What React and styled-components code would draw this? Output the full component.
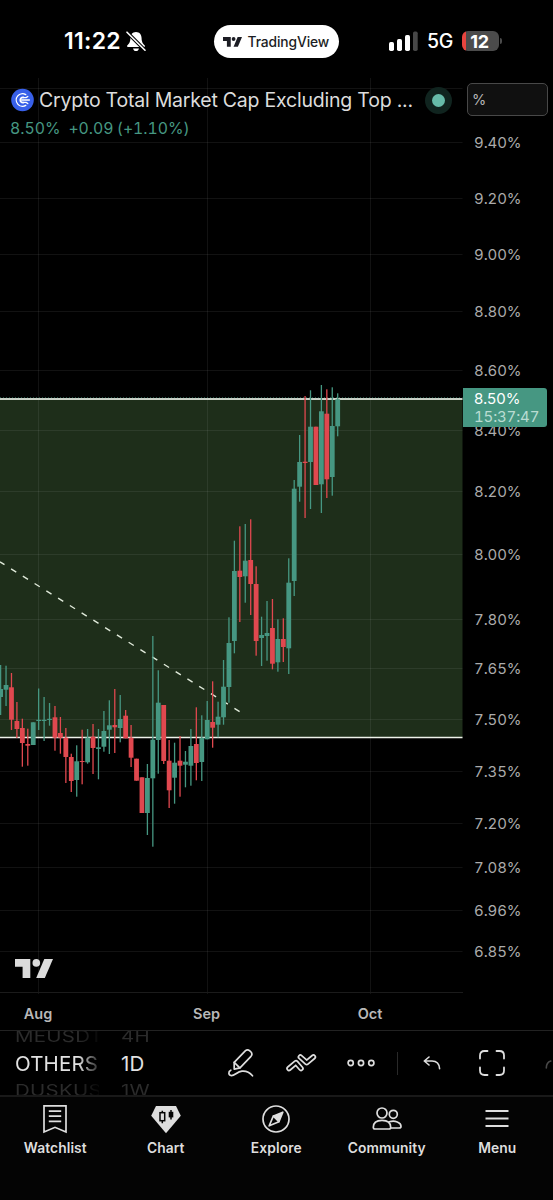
import React from "react";
import styled, { createGlobalStyle } from "styled-components";

const UP = "#469782";
const DOWN = "#e0484f";
const INK = "#d9d9d9";

const GlobalStyle = createGlobalStyle`
  * { box-sizing: border-box; }
  html, body { margin: 0; background: #000; }
  body { font-family: Inter, "Liberation Sans", sans-serif; color: ${INK}; overflow: hidden; }
  svg { display: block; }
`;

const Screen = styled.div`
  width: 553px;
  height: 1200px;
  display: flex;
  flex-direction: column;
  background: #000;
  overflow: hidden;
`;

/* status bar */
const StatusBar = styled.header`
  height: 78px;
  padding: 25px 50px 0 64px;
  display: flex;
  align-items: flex-start;
  flex: none;
  color: #fff;
`;
const Clock = styled.div`
  width: 150px;
  height: 32px;
  display: flex;
  align-items: center;
  gap: 5.5px;
  font-size: 23px;
  font-weight: 600;
  letter-spacing: 0.3px;
`;
const Island = styled.div`
  width: 125px;
  height: 33px;
  border-radius: 17px;
  background: #fff;
  color: #1c1d24;
  display: flex;
  align-items: center;
  padding-left: 9px;
  gap: 5.5px;
  font-size: 13.8px;
  font-weight: 500;
  letter-spacing: -0.1px;
`;
const Radio = styled.div`
  height: 32px;
  margin-left: 50px;
  display: flex;
  align-items: center;
  font-size: 19.5px;
  font-weight: 500;
`;
const Network = styled.span`
  width: 35px;
  margin-left: 9px;
  letter-spacing: -0.2px;
`;
const Battery = styled.div`
  width: 37px;
  height: 20px;
  border-radius: 6px;
  background: linear-gradient(90deg, #e8453f 0 4.5px, #4b4b4b 4.5px);
  display: flex;
  align-items: center;
  justify-content: center;
  padding-right: 2px;
  font-size: 18px;
  font-weight: 700;
  letter-spacing: -0.2px;
`;
const BatteryCap = styled.div`
  width: 2px;
  height: 6px;
  margin-left: 1px;
  border-radius: 0 2px 2px 0;
  background: #4b4b4b;
`;

/* chart */
const ChartArea = styled.main`
  position: relative;
  height: 952px;
  flex: none;
  display: flex;
`;
const Pane = styled.div`
  width: 463px;
  display: flex;
  flex-direction: column;
`;
const TimeAxis = styled.div`
  height: 36px;
  display: grid;
  grid-template-columns: 76px 261px 66px 1fr;
  align-items: center;
  font-size: 14.5px;
  font-weight: 600;
  color: #b8b8b8;
  & > span { text-align: center; white-space: nowrap; padding-top: 3px; }
`;
const PriceAxis = styled.div`
  flex: 1;
  display: flex;
  flex-direction: column;
  padding: 5px 5px 0 4px;
`;
const UnitBox = styled.div`
  height: 33px;
  flex: none;
  border: 1.5px solid #484848;
  border-radius: 5px;
  background: #101010;
  padding-left: 4px;
  display: flex;
  align-items: center;
  font-size: 14.5px;
  color: #b5b5b5;
`;
const PriceTick = styled.div`
  height: 18px;
  flex: none;
  margin-top: ${(p) => p.$gap}px;
  padding-left: 7px;
  line-height: 18px;
  font-size: 15px;
  font-variant-numeric: tabular-nums;
  letter-spacing: -0.1px;
  color: #ababab;
`;
const PriceTag = styled.div`
  position: absolute;
  left: 463px;
  top: 310px;
  width: 83.5px;
  height: 38.5px;
  border-radius: 0 3px 3px 0;
  background: ${UP};
  padding: 1px 0 0 11px;
  color: #fff;
  font-size: 15px;
  line-height: 20px;
  & > div:last-child {
    color: #b9dcd2;
    line-height: 15px;
    font-variant-numeric: tabular-nums;
    letter-spacing: -0.15px;
  }
`;
const Legend = styled.div`
  position: absolute;
  left: 10px;
  top: 8px;
  width: 444px;
`;
const LegendTitle = styled.div`
  height: 28px;
  display: flex;
  align-items: center;
  color: #dcdcdc;
  font-size: 19.5px;
  white-space: nowrap;
`;
const LegendName = styled.span`
  width: 385.5px;
  margin-left: 5px;
  letter-spacing: -0.22px;
`;
const LegendValues = styled.div`
  height: 26px;
  line-height: 29px;
  display: flex;
  gap: 8px;
  color: ${UP};
  font-size: 15.8px;
  font-variant-numeric: tabular-nums;
  letter-spacing: -0.02px;
  word-spacing: -1px;
`;
const LiveDot = styled.div`
  width: 27px;
  height: 27px;
  border-radius: 50%;
  background: #10241f;
  display: grid;
  place-items: center;
  &::after {
    content: "";
    width: 13px;
    height: 13px;
    border-radius: 50%;
    background: #66bba9;
  }
`;

/* toolbar */
const Toolbar = styled.div`
  height: 67px;
  flex: none;
  border-top: 1px solid #222;
  border-bottom: 2px solid #191919;
  display: flex;
  align-items: center;
  overflow: hidden;
`;
const Wheel = styled.div`
  width: ${(p) => p.$width}px;
  height: 64px;
  padding-top: 1px;
  margin-left: ${(p) => p.$offset}px;
  flex: none;
  display: flex;
  flex-direction: column;
  align-items: flex-start;
  justify-content: center;
  overflow: hidden;
  white-space: nowrap;
  ${(p) => p.$fade && "mask-image: linear-gradient(90deg, #000 75%, transparent 105%);"}
`;
const WheelItem = styled.div`
  height: ${(p) => (p.$active ? 32 : 22)}px;
  line-height: ${(p) => (p.$active ? 32 : 22)}px;
  flex: none;
  font-size: 20.5px;
  letter-spacing: ${(p) => (p.$active ? 0.15 : 0.25)}px;
  color: ${(p) => (p.$active ? "#e2e2e2" : "#2b2b2b")};
  transform: ${(p) => (p.$active ? "none" : "scaleY(0.76)")};
`;
const Tools = styled.div`
  flex: 1;
  margin-left: 29px;
  display: grid;
  grid-template-columns: 61px 60px 60px 12px 58px 62px 1fr;
  align-items: center;
  justify-items: center;
  & > :last-child { justify-self: end; }
`;
const Divider = styled.div`
  width: 1px;
  height: 23px;
  background: #292929;
`;

/* bottom navigation */
const TabBar = styled.nav`
  flex: 1;
  background: #040404;
  display: grid;
  grid-template-columns: repeat(5, 110.5px);
`;
const Tab = styled.div`
  display: flex;
  flex-direction: column;
  align-items: center;
  padding-top: 7px;
  font-size: 13.8px;
  font-weight: 600;
  letter-spacing: 0.1px;
  color: #dedede;
`;
const TabLabel = styled.span`
  margin-top: 4.5px;
  line-height: 18px;
`;

const candles = `
665 689 697 715 g|665.7 685 689.7 706 g|673 687.3 719.7 730 r|702 721 729 738 r
718.7 728 743 766.7 r|728.7 744 745.7 765.7 r|722.3 722.3 745 745 g|688.5 719.8 721 730 g
697 719.8 721 741 g|703 718.8 720 725.7 g|706 717.3 737.7 750.7 r|717 733 737.7 753.7 r
728 737.7 757 783 r|753.7 757 781 792 r|745.3 761.3 780 796.7 g|729.7 761 762 784.3 r
729 737.7 762.3 763.7 g|724 736.7 748 774 r|729 747.3 749 779.3 g|711 731 746.7 751.7 g
700.3 725.3 729.7 754 g|689 725 727.3 753 r|695 719 728 742.3 g|710 715.7 738.3 738.3 r
725 737.7 757.7 767 r|758.7 758.7 780.7 780.7 r|777.3 777.3 813 813 r|764 778 813 835 g
636 739.7 778.3 846.7 g|670.3 702.7 740 773.7 g|705 705 761 764 r|740 760.7 790.3 808 r
742.7 762.7 777.7 803.7 g|736 760.7 765.7 796.7 r|751 761.7 764.7 787.3 g|729 746 765.7 785.7 g
707.3 744 763 780.3 r|715.3 737.7 762 781 g|701 720 739.3 739.3 g|681.3 722 727.7 747.7 r
701.7 716.7 724.7 737.3 g|660 686.7 717.3 724.7 g|617.3 643 687 702.7 g|540.7 571 641 653.3 g
526.3 570.7 577 622 r|524 560.7 576.3 602.7 g|519.3 560 584 615 r|566.3 584 641 655.7 r
616.7 635 638 666 g|601 633 636 660.7 g|599 628 663.7 669.3 r|619.3 639 662.3 671.7 g
618.3 639 647 662 r|558.3 582.7 648.3 674 g|480 488.7 581 596 g|435 462 486.7 501.7 g
396 461.7 463 518 r|390.3 426.7 462 509 g|426.7 426.7 485 485 r|385 411.3 484.3 513 g
389.3 413.7 479.3 498 r|387.3 426 477 495.7 g|393.3 399.3 426.3 436.3 g`
  .trim()
  .split(/[|\n]/)
  .map((row) => {
    const [high, top, bottom, low, side] = row.split(" ");
    return { high: +high, top: +top, bottom: +bottom, low: +low, color: side === "g" ? UP : DOWN };
  });

const ticks = [
  ["9.40%", 142], ["9.20%", 198], ["9.00%", 254], ["8.80%", 311], ["8.60%", 370],
  ["8.40%", 430], ["8.20%", 491], ["8.00%", 554], ["7.80%", 619], ["7.65%", 668.5],
  ["7.50%", 719], ["7.35%", 771], ["7.20%", 823.5], ["7.08%", 867], ["6.96%", 910], ["6.85%", 951],
];

function TVLogo({ width, height, color }) {
  return (
    <svg width={width} height={height} viewBox="0 0 38 20" preserveAspectRatio="none" fill={color}>
      <path d="M0 0H15.5V19.5H7.8V8H0Z" />
      <circle cx="21.2" cy="4" r="3.8" />
      <path d="M29.3 0H38L29.8 19.5H21.2Z" />
    </svg>
  );
}

function Plot() {
  return (
    <svg width="463" height="916" viewBox="0 78 463 916">
      <rect x="0" y="399" width="462.5" height="339" fill="#1e2e1a" />
      <g stroke="#fff" strokeOpacity="0.07">
        {[88.5, ...ticks.map((t) => Math.floor(t[1]) + 0.5)].map((y) => (
          <path key={y} d={`M0 ${y}H462.5`} />
        ))}
        {[38.5, 207.5, 370.5].map((x) => (
          <path key={x} d={`M${x} 78V994`} />
        ))}
      </g>
      <path d="M0 992.5H463" stroke="#1b1b1b" />
      <path d="M0 561.9L240 711.8" stroke="#e0eada" strokeWidth="1.4" strokeDasharray="6.1 7.76" strokeDashoffset="0.8" />
      <path d="M0 399H462.5" stroke="#c9d0c6" strokeWidth="1.8" />
      <path d="M0 397.6H462.5" stroke={UP} strokeWidth="1" strokeDasharray="1 2" opacity="0.6" />
      <path d="M0 737.5H462.5" stroke="#eef2ea" strokeWidth="1.5" />
      {candles.map((c, i) => {
        const x = 0.6 + i * 5.437;
        return (
          <g key={i} fill={c.color}>
            <rect x={x - 0.65} y={c.high} width="1.3" height={c.low - c.high} />
            <rect x={x - 2.4} y={c.top} width="4.8" height={c.bottom - c.top} />
          </g>
        );
      })}
      <g transform="translate(15 959)" fill="#dcdcdc">
        <path d="M0 0H15.3V19H7.6V7.7H0Z" />
        <circle cx="21.3" cy="3.9" r="3.8" />
        <path d="M29.3 0H38L29.8 19H21.2Z" />
      </g>
    </svg>
  );
}

const line = { fill: "none", stroke: "#dedede", strokeLinecap: "round", strokeLinejoin: "round" };

function BellOff() {
  return (
    <svg width="20" height="21" viewBox="0 0 20 21">
      <path d="M10 1C6.3 1 4.5 3.9 4.4 7.2C4.3 11.2 3 12.6 1.4 14.2C.8 14.9 1 16 2 16H18C19 16 19.2 14.9 18.6 14.2C17 12.6 15.7 11.2 15.6 7.2C15.5 3.9 13.7 1 10 1ZM7 17.4H13C12.6 19 11.5 20 10 20S7.4 19 7 17.4Z" fill="#fff" />
      <path d="M1 1.2L19 19.2" stroke="#000" strokeWidth="3.6" />
      <path d="M1 1.2L19 19.2" stroke="#fff" strokeWidth="1.6" strokeLinecap="round" />
    </svg>
  );
}

function Signal() {
  return (
    <svg width="29" height="20" viewBox="0 0 29 20" fill="#fff">
      <rect x="0" y="11" width="5" height="9" rx="1.7" />
      <rect x="8" y="8" width="5" height="12" rx="1.7" />
      <rect x="16" y="4" width="5" height="16" rx="1.7" />
      <rect x="24" y="0.5" width="4.7" height="19.5" rx="1.7" fill="#484848" />
    </svg>
  );
}

function CoinIcon() {
  return (
    <svg width="24" height="24" viewBox="0 0 24 24" fill="none" stroke="#fff" strokeWidth="1.3" strokeLinecap="round">
      <circle cx="12.5" cy="12" r="11.3" fill="#3860e9" stroke="none" />
      <path d="M15.8 6.6A6.3 6.3 0 1 0 15.8 17.4" />
      <path d="M13.4 9.4C9.2 8.8 9.2 15.2 13.4 14.6" strokeWidth="1.7" />
      <path d="M11.5 12H19.4M13 9.6H16.2L17.8 8.4M13 14.4H16.2L17.8 15.6" />
    </svg>
  );
}

function DrawIcon() {
  return (
    <svg width="28" height="30" viewBox="0 0 28 30" {...line} strokeWidth="1.7">
      <path d="M7.2 14.4L18.5 2.7Q20.5 1 22.8 2.8L24 4Q25.8 6.2 24 8.3L13 19.8L7.2 21.1Z" />
      <path d="M7.2 14.4L12.8 19.8" />
      <path d="M3.8 22.2C1 23.4 1.3 27.4 4.3 27.6C7.8 27.8 10 23.6 15 23.2C19.5 22.8 23 24.8 25.5 27.8" />
    </svg>
  );
}

function PatternIcon() {
  return (
    <svg width="30" height="18" viewBox="0 0 30 18" overflow="visible" {...line}>
      {["M3 14.5L10 8.7L15 14.5", "M14.4 3L20.7 8.6L27.4 3"].map((d) => (
        <g key={d}>
          <path d={d} strokeWidth="5.6" />
          <path d={d} strokeWidth="2.2" stroke="#000" />
        </g>
      ))}
    </svg>
  );
}

function MoreIcon() {
  return (
    <svg width="28" height="8" viewBox="0 0 28 8" {...line} strokeWidth="1.7">
      <circle cx="3.7" cy="4" r="2.6" />
      <circle cx="14" cy="4" r="2.6" />
      <circle cx="24.3" cy="4" r="2.6" />
    </svg>
  );
}

function UndoIcon() {
  return (
    <svg width="18" height="14" viewBox="0 0 18 14" {...line} strokeWidth="1.6">
      <path d="M6 1L1.3 5L6 9M1.8 5H9C13.8 5 16.3 7.7 16.6 12.8" />
    </svg>
  );
}

function FullscreenIcon() {
  return (
    <svg width="26" height="26" viewBox="0 0 26 26" {...line} strokeWidth="1.8">
      <path d="M1 8.5V5.5Q1 1 5.5 1H8.5M17.5 1H20.5Q25 1 25 5.5V8.5M25 17.5V20.5Q25 25 20.5 25H17.5M8.5 25H5.5Q1 25 1 20.5V17.5" />
    </svg>
  );
}

function RedoEdge() {
  return (
    <svg width="8" height="12" viewBox="0 0 8 12" {...line} stroke="#484848" strokeWidth="1.6">
      <path d="M1.3 11Q1.3 5.3 5.8 4" />
    </svg>
  );
}

function WatchlistIcon() {
  return (
    <svg width="30" height="30" viewBox="0 0 30 30" {...line} strokeLinecap="butt" strokeLinejoin="miter" strokeWidth="1.7">
      <path d="M4 1.8H26V28L15 23.3L4 28ZM8.8 7.2H21.2M8.8 12.2H21.2M8.8 17.3H21.2" />
    </svg>
  );
}

function ChartIcon() {
  return (
    <svg width="30" height="30" viewBox="0 0 30 30">
      <path d="M5 2H25L29.8 11.8L15 29.2L.2 11.8Z" fill="#dedede" />
      <g fill="none" stroke="#050505" strokeWidth="1.5">
        <path d="M11.3 6.7V8.5M11.3 16.8V19.3M20 6V15.5" />
        <rect x="9" y="8.7" width="4.7" height="8" />
      </g>
      <rect x="17.7" y="7.8" width="4.6" height="5.6" fill="#050505" />
    </svg>
  );
}

function ExploreIcon() {
  return (
    <svg width="30" height="30" viewBox="0 0 30 30" {...line} strokeWidth="1.7">
      <circle cx="15" cy="15" r="13" />
      <path d="M21.8 8.2L18 17.4L12.6 12Z" fill="#dedede" />
      <path d="M12.3 12L18 17.7L8.2 21.8Z" />
    </svg>
  );
}

function CommunityIcon() {
  return (
    <svg width="30" height="30" viewBox="0 0 30 30" {...line} strokeWidth="1.7">
      <circle cx="10" cy="9" r="5" />
      <circle cx="21.3" cy="10.3" r="4" />
      <path d="M1.3 23.3C1.3 18.7 4.8 16.3 10 16.3S18.7 18.7 18.7 23.3Q18.7 25 17 25H3Q1.3 25 1.3 23.3Z" />
      <path d="M17.3 17.8C23 16 29 18.5 29 22.2Q29 24 27.2 24H19" />
    </svg>
  );
}

function MenuIcon() {
  return (
    <svg width="30" height="30" viewBox="0 0 30 30" {...line} strokeLinecap="butt" strokeWidth="1.8">
      <path d="M3.5 7H26.5M3.5 14.5H26.5M3.5 22H26.5" />
    </svg>
  );
}

const tabs = [
  ["Watchlist", WatchlistIcon],
  ["Chart", ChartIcon],
  ["Explore", ExploreIcon],
  ["Community", CommunityIcon],
  ["Menu", MenuIcon],
];

export default function App() {
  return (
    <Screen>
      <GlobalStyle />
      <StatusBar>
        <Clock>11:22 <BellOff /></Clock>
        <Island><TVLogo width={19} height={10} color="#1c1d24" />TradingView</Island>
        <Radio>
          <Signal />
          <Network>5G</Network>
          <Battery>12</Battery>
          <BatteryCap />
        </Radio>
      </StatusBar>

      <ChartArea>
        <Pane>
          <Plot />
          <TimeAxis><span>Aug</span><span>Sep</span><span>Oct</span></TimeAxis>
        </Pane>
        <PriceAxis>
          <UnitBox>%</UnitBox>
          {ticks.map(([label, y], i) => (
            <PriceTick key={label} $gap={i ? y - ticks[i - 1][1] - 18 : y - 124.5}>{label}</PriceTick>
          ))}
        </PriceAxis>
        <Legend>
          <LegendTitle>
            <CoinIcon />
            <LegendName>Crypto Total Market Cap Excluding Top ...</LegendName>
            <LiveDot />
          </LegendTitle>
          <LegendValues><span>8.50%</span><span>+0.09 (+1.10%)</span></LegendValues>
        </Legend>
        <PriceTag><div>8.50%</div><div>15:37:47</div></PriceTag>
      </ChartArea>

      <Toolbar>
        <Wheel $width={84} $offset={15} $fade>
          <WheelItem>MEUSDT</WheelItem>
          <WheelItem $active>OTHERS</WheelItem>
          <WheelItem>DUSKUSDT</WheelItem>
        </Wheel>
        <Wheel $width={60} $offset={22}>
          <WheelItem>4H</WheelItem>
          <WheelItem $active>1D</WheelItem>
          <WheelItem>1W</WheelItem>
        </Wheel>
        <Tools>
          <DrawIcon />
          <PatternIcon />
          <MoreIcon />
          <Divider />
          <UndoIcon />
          <FullscreenIcon />
          <RedoEdge />
        </Tools>
      </Toolbar>

      <TabBar>
        {tabs.map(([label, Icon]) => (
          <Tab key={label}>
            <Icon />
            <TabLabel>{label}</TabLabel>
          </Tab>
        ))}
      </TabBar>
    </Screen>
  );
}
